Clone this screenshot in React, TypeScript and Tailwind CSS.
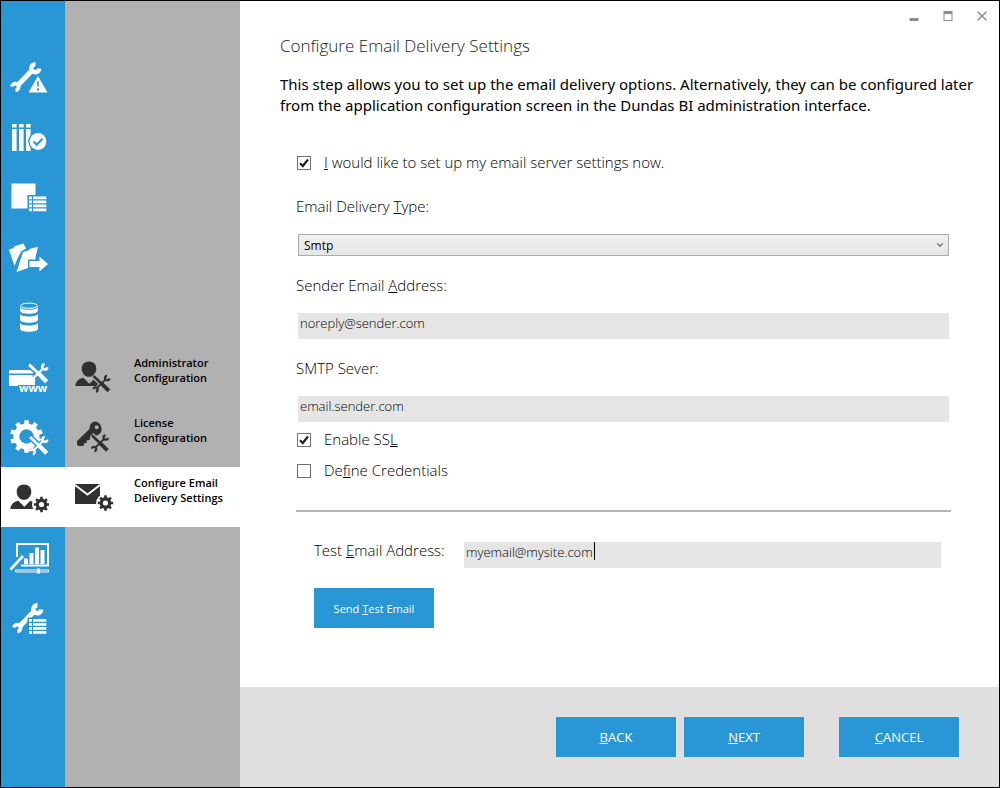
import React from "react";

const BLUE = "#2996d5";
const DARK = "#303030";
const GREY = "#b1b1b1";

function gearPath(cx: number, cy: number, outer: number, inner: number, teeth: number, hole: number) {
  const step = (Math.PI * 2) / teeth;
  const pts: string[] = [];
  for (let i = 0; i < teeth; i++) {
    const a = i * step - Math.PI / 2;
    const corners: [number, number][] = [
      [inner, -0.3],
      [outer, -0.2],
      [outer, 0.2],
      [inner, 0.3],
    ];
    corners.forEach(([r, t]) => {
      pts.push(`${(cx + r * Math.cos(a + t * step)).toFixed(2)} ${(cy + r * Math.sin(a + t * step)).toFixed(2)}`);
    });
  }
  return `M${pts.join("L")}ZM${cx - hole} ${cy}a${hole} ${hole} 0 1 0 ${hole * 2} 0a${hole} ${hole} 0 1 0 ${-hole * 2} 0Z`;
}

function Glyph({ color, children }: { color: string; children: React.ReactNode }) {
  return (
    <svg viewBox="0 0 40 40" className="size-10 shrink-0" fill={color} stroke="none" aria-hidden="true">
      {children}
    </svg>
  );
}

function Wrench({ color }: { color: string }) {
  return (
    <g fill="none" stroke={color}>
      <path d="M9 27 23 12.500" strokeWidth="5" />
      <path d="M26.500 6.200A4 4 0 1 0 30.300 10.500" strokeWidth="4.400" />
      <path d="M3 28.500A3.300 3.300 0 1 1 6.500 32.300" strokeWidth="3.800" />
    </g>
  );
}

function Tools({ x, y, size, color, bg }: { x: number; y: number; size: number; color: string; bg: string }) {
  return (
    <g transform={`translate(${x} ${y}) scale(${size / 18})`} fill="none">
      <path d="M0.500 0.500 9 8.500M9 8.500 17 16.500" stroke={bg} strokeWidth="5.500" />
      <path d="M5 13 13 5" stroke={bg} strokeWidth="4" />
      <g stroke={color}>
        <path d="M4.500 13.500 13.500 4.500" strokeWidth="2" />
        <path d="M15 0.800A2.300 2.300 0 1 0 17.400 3.400" strokeWidth="2.300" />
        <path d="M0.800 14.500A2.300 2.300 0 1 1 3.600 17.300" strokeWidth="2.300" />
        <path d="M1 1 10 9.500" strokeWidth="2.600" />
        <path d="M9.500 9 16.800 16.400" strokeWidth="4" />
      </g>
    </g>
  );
}

function ListMark({ color, bg, top }: { color: string; bg: string; top: number }) {
  return (
    <g transform={`translate(0 ${top})`}>
      <path d="M18.500-1.500H38V16H18.500z" fill={bg} />
      {[0, 4, 8, 12].map((y) => (
        <path key={y} d={`M20 ${y}h3v2.800h-3zM24 ${y}h13.300v2.800H24z`} fill={color} />
      ))}
    </g>
  );
}

function Person({ dy }: { dy: number }) {
  return (
    <g transform={`translate(0 ${dy})`}>
      <path d="M15 3.500c4.500 0 7.300 3.100 7.300 7.200 0 4.300-3.300 8.100-7.300 8.100s-7.300-3.800-7.300-8.100c0-4.100 2.800-7.200 7.300-7.200Z" />
      <path d="M1.300 28c.7-4.800 3.400-7.300 8-8.300l6 6 6-6c3 .8 5.200 2.500 6.200 5V28Z" />
    </g>
  );
}

const railSteps: { label: string; icon: React.ReactNode; active?: boolean }[] = [
  {
    label: "Prerequisites",
    icon: (
      <>
        <Wrench color="white" />
        <path d="M29 15.500 40 35.500H18Z" fill={BLUE} />
        <path d="M29 18 38.500 34.500H19.500Z" />
        <path d="M28 23.500h2l-.4 5.500h-1.200zM28 30.500h2v2h-2z" fill={BLUE} />
      </>
    ),
  },
  {
    label: "Checks",
    icon: (
      <>
        <path d="M3 6h4.600v3.500H3zM10 6h4.600v3.500H10zM17 6h4.600v3.500H17zM3 11h4.600v22H3zM10 11h4.600v22H10zM17 11h4.600v22H17z" />
        <circle cx="29" cy="23.500" r="9.800" fill={BLUE} />
        <circle cx="29" cy="23.500" r="8.400" />
        <path d="m24.500 23.500 3.200 3.200 5.800-6" fill="none" stroke={BLUE} strokeWidth="2" />
      </>
    ),
  },
  {
    label: "Features",
    icon: (
      <>
        <path d="M2.500 5.500h24v25h-24z" />
        <ListMark color="white" bg={BLUE} top={18.5} />
      </>
    ),
  },
  {
    label: "Folders",
    icon: (
      <>
        <path d="M0 11.500 4.500 10l1.500-2 8.500-2.500 1.500 3 1 2-4.500 2.500L8 21.500 5.500 28Z" />
        <path d="m14 14 5.500-1.500 2-2L29 9l-2.500 10v2.500H19V30L7.500 34Z" />
        <path d="M20.500 23h10v-4.500L39 26l-8.500 7.500V29h-10Z" />
      </>
    ),
  },
  {
    label: "Database",
    icon: (
      <>
        <path d="M11 8.500v4c0 2 4 3.300 9 3.300s9-1.300 9-3.300v-4c0 2-4 3.200-9 3.200s-9-1.200-9-3.200Z" />
        <ellipse cx="20" cy="7.700" rx="8.500" ry="2.600" fill="none" stroke="white" />
        <path d="M11 15.500v6c0 2 4 3.300 9 3.300s9-1.300 9-3.300v-6c0 1.800-4 3-9 3s-9-1.200-9-3Z" />
        <path d="M11 24.500v6c0 2 4 3.300 9 3.300s9-1.300 9-3.300v-6c0 1.800-4 3-9 3s-9-1.200-9-3Z" />
      </>
    ),
  },
  {
    label: "Web site",
    icon: (
      <>
        <path d="M0 12h24v3.500H0zM0 17h26v11H0z" />
        <Tools x={19} y={5.5} size={20} color="white" bg={BLUE} />
        <text
          x="10"
          y="34"
          stroke={BLUE}
          strokeWidth="2"
          paintOrder="stroke"
          className="font-['Open_Sans',sans-serif] text-[11px] font-bold"
        >
          www
        </text>
      </>
    ),
  },
  {
    label: "Configuration",
    icon: (
      <>
        <path d={gearPath(17.5, 18.5, 16.5, 13, 10, 7.2)} fillRule="evenodd" />
        <Tools x={20} y={18} size={19} color="white" bg={BLUE} />
      </>
    ),
  },
  {
    label: "Administration",
    active: true,
    icon: (
      <>
        <Person dy={3} />
        <circle cx="32.500" cy="26.500" r="9.500" fill="white" />
        <path d={gearPath(32.5, 26.5, 7.8, 5.8, 8, 2.6)} fillRule="evenodd" />
      </>
    ),
  },
  {
    label: "Summary",
    icon: (
      <>
        <path d="M8 19V6h31v21.500H12" fill="none" stroke="white" strokeWidth="2" />
        <path d="M15 20.500h4V26h-4zM20.500 15h4v11h-4zM26 9.500h4V26h-4zM31.500 12h4v14h-4z" />
        <path d="M1.500 31.500 14 18" fill="none" stroke="white" strokeWidth="2.600" />
        <path d="M6.500 32h33v2h-33z" fill="none" stroke="white" />
        <path d="M28 30.500h3v5h-3z" />
      </>
    ),
  },
  {
    label: "Finish",
    icon: (
      <>
        <g transform="translate(2 1)">
          <Wrench color="white" />
        </g>
        <ListMark color="white" bg={BLUE} top={21} />
      </>
    ),
  },
];

const subSteps: { label: string; icon: React.ReactNode; active?: boolean }[] = [
  {
    label: "Administrator Configuration",
    icon: (
      <>
        <Person dy={0} />
        <Tools x={18.5} y={17} size={17.5} color={DARK} bg={GREY} />
      </>
    ),
  },
  {
    label: "License Configuration",
    icon: (
      <>
        <path
          d="M21 3.500a7.300 7.300 0 0 1 3 13.500c-2 1.200-4.300 1.500-6.300.8l-1.700 1.700-.3 2.500-2.700.3-.4 2.700-2.600.3-.4 2.700H4.500l-1.500-1.500V23L15.500 11c0-4 2-7 5.500-7.500Zm1.700 3.700a2 2 0 1 0 0 4 2 2 0 0 0 0-4Z"
          fillRule="evenodd"
        />
        <Tools x={17} y={16.5} size={17.5} color={DARK} bg={GREY} />
      </>
    ),
  },
  {
    label: "Configure Email Delivery Settings",
    active: true,
    icon: (
      <>
        <path d="M1 6h25v20H1z" />
        <path d="m1 7 12.500 9.500L26 7" fill="none" stroke="white" strokeWidth="1.800" />
        <circle cx="31.500" cy="25" r="9.300" fill="white" />
        <path d={gearPath(31.5, 25, 7.8, 5.8, 8, 2.6)} fillRule="evenodd" />
      </>
    ),
  },
];

function CheckRow({ id, checked, children, className }: { id: string; checked?: boolean; children: React.ReactNode; className: string }) {
  return (
    <div className={`flex items-center gap-3 ${className}`}>
      <span className="mt-0.5 grid size-4 place-items-center">
        <input
          id={id}
          type="checkbox"
          defaultChecked={checked}
          className="peer col-start-1 row-start-1 size-3.5 appearance-none border border-[#707070] bg-white"
        />
        <svg
          viewBox="0 0 14 14"
          className="pointer-events-none invisible col-start-1 row-start-1 size-3.5 peer-checked:visible"
          aria-hidden="true"
        >
          <path d="M3 7.200 5.800 10 11 3.500" fill="none" stroke="#212121" strokeWidth="2.200" />
        </svg>
      </span>
      <label htmlFor={id} className="text-[15px] leading-6 font-light">
        {children}
      </label>
    </div>
  );
}

function WideField({ id, label, value }: { id: string; label: React.ReactNode; value: string }) {
  return (
    <div className="mt-[17px] flex flex-col gap-4">
      <label htmlFor={id} className="text-[15px] leading-6 font-light">
        {label}
      </label>
      <input id={id} type="text" defaultValue={value} className="mx-0.5 h-[26px] bg-[#e5e5e5] px-0.5 pb-1.5 text-[13px] font-light" />
    </div>
  );
}

export default function App() {
  return (
    <div className="flex min-h-screen border border-black bg-white font-['Open_Sans','Noto_Sans',sans-serif] text-black">
      <nav aria-label="Setup stages" className="w-16 shrink-0 bg-[#2996d5] pt-[46px]">
        {railSteps.map((s) => (
          <a
            key={s.label}
            href="#"
            aria-label={s.label}
            className={`flex h-[60px] items-center pt-0.5 pl-2 ${s.active ? "bg-white" : ""}`}
          >
            <Glyph color={s.active ? DARK : "white"}>{s.icon}</Glyph>
          </a>
        ))}
      </nav>
      <nav aria-label="Setup steps" className="w-[175px] shrink-0 bg-[#b1b1b1] pt-[346px]">
        {subSteps.map((s) => (
          <a key={s.label} href="#" className={`flex h-[60px] items-start gap-5 pl-[9px] ${s.active ? "bg-white" : ""}`}>
            <span className="pt-[11px]">
              <Glyph color={DARK}>{s.icon}</Glyph>
            </span>
            <span className="w-24 pt-2 text-[11px] leading-[15px] font-semibold">{s.label}</span>
          </a>
        ))}
      </nav>

      <div className="flex min-w-0 grow flex-col">
        <div className="flex h-[33px] items-center justify-end gap-3.5 pr-[7px] pb-1 text-[#8c8c8c]">
          <button type="button" aria-label="Minimize" className="grid size-5 place-items-center">
            <svg viewBox="0 0 10 10" className="size-2.5">
              <path d="M.5 7h9v3h-9z" fill="currentColor" />
            </svg>
          </button>
          <button type="button" aria-label="Maximize" className="grid size-5 place-items-center">
            <svg viewBox="0 0 10 10" className="size-2.5">
              <path d="M.5 0h9v10h-9zM1.500 3v6h7V3z" fill="currentColor" fillRule="evenodd" />
            </svg>
          </button>
          <button type="button" aria-label="Close" className="grid size-5 place-items-center">
            <svg viewBox="0 0 10 10" className="size-2.5">
              <path d="m.7.700 8.600 8.600M9.300.700.700 9.300" stroke="currentColor" strokeWidth="1.500" />
            </svg>
          </button>
        </div>

        <main className="flex flex-col pr-4 pl-10">
          <h1 className="text-[17px] leading-6 font-light text-[#222]">Configure Email Delivery Settings</h1>
          <p className="mt-4 font-['Noto_Sans','Open_Sans',sans-serif] text-[15px] leading-[21px]">
            This step allows you to set up the email delivery options. Alternatively, they can be configured later from the application
            configuration screen in the Dundas BI administration interface.
          </p>

          <form className="mr-8 ml-4 flex flex-col" onSubmit={(e) => e.preventDefault()}>
            <CheckRow id="setup" checked className="mt-[34px]">
              <u>I</u> would like to set up my email server settings now.
            </CheckRow>

            <label htmlFor="type" className="mt-5 text-[15px] leading-6 font-light">
              Email Delivery <u>T</u>ype:
            </label>
            <div className="mx-0.5 mt-4 grid items-center">
              <select
                id="type"
                className="col-start-1 row-start-1 h-[22px] appearance-none border border-[#acacac] bg-linear-to-b from-[#f0f0f0] to-[#e5e5e5] px-[5px] pt-px text-xs"
              >
                <option>Smtp</option>
              </select>
              <svg viewBox="0 0 8 6" className="pointer-events-none col-start-1 row-start-1 mr-[5px] h-1.5 w-2 justify-self-end" aria-hidden="true">
                <path d="m1.200 1.300 2.800 2.800 2.800-2.800" fill="none" stroke="#606060" strokeWidth="1.200" />
              </svg>
            </div>

            <WideField id="sender" label={<>Sender Email <u>A</u>ddress:</>} value="noreply@sender.com" />
            <WideField id="server" label="SMTP Sever:" value="email.sender.com" />

            <CheckRow id="ssl" checked className="mt-[5px]">
              Enable SS<u>L</u>
            </CheckRow>
            <CheckRow id="credentials" className="mt-[7px]">
              De<u>f</u>ine Credentials
            </CheckRow>

            <hr className="mt-7 border-t-2 border-[#b4b4b4]" />

            <div className="mt-[30px] mr-2.5 ml-[18px] flex items-start">
              <label htmlFor="test" className="-mt-1 w-[150px] text-[15px] leading-6 font-light">
                Test <u>E</u>mail Address:
              </label>
              <div className="relative flex grow">
                <input id="test" type="text" defaultValue="myemail@mysite.com" className="h-[26px] w-full bg-[#e5e5e5] px-0.5 pb-1.5 text-[13px] font-light" />
                <span className="pointer-events-none absolute top-0 left-[130px] h-[18px] w-px bg-black" />
              </div>
            </div>
            <button type="submit" className="mt-5 ml-[18px] h-10 w-[120px] bg-[#2996d5] pt-0.5 text-[11px] text-white">
              Send <u>T</u>est Email
            </button>
          </form>
        </main>

        <footer className="mt-auto flex h-[100px] items-center justify-end bg-[#dfdfdf] pr-10 text-[13px] text-white">
          <button type="button" className="h-10 w-[120px] bg-[#2996d5] pt-0.5">
            <u>B</u>ACK
          </button>
          <button type="button" className="ml-2 h-10 w-[120px] bg-[#2996d5] pt-0.5">
            <u>N</u>EXT
          </button>
          <button type="button" className="ml-[35px] h-10 w-[120px] bg-[#2996d5] pt-0.5">
            <u>C</u>ANCEL
          </button>
        </footer>
      </div>
    </div>
  );
}
